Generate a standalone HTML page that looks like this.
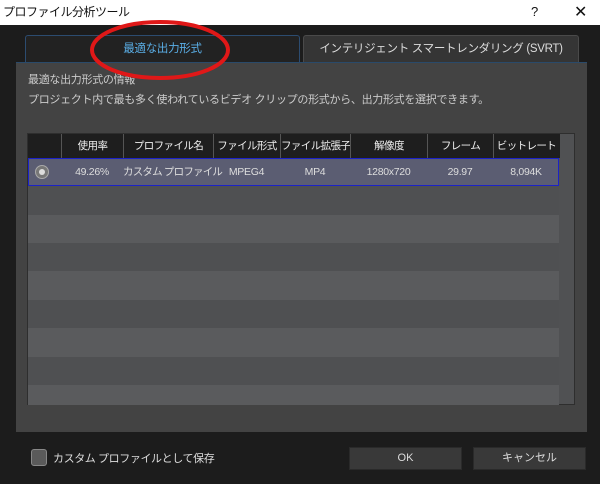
<!DOCTYPE html>
<html><head><meta charset="utf-8"><style>
*{margin:0;padding:0;box-sizing:border-box}
body{width:600px;height:484px;background:#1c1c1c;font-family:"Liberation Sans","Noto Sans CJK JP",sans-serif;position:relative;overflow:hidden;color:#ddd}
.a{position:absolute;white-space:nowrap}
.title{left:0;top:0;width:600px;height:25px;background:#fff;color:#111;font-size:12px;line-height:25px;padding-left:3px;letter-spacing:-0.5px}
.tab{top:35px;height:27px;font-size:11.5px;line-height:27px;text-align:center;border-radius:3px 3px 0 0;letter-spacing:-0.3px}
.panel{left:16px;top:62px;width:571px;height:370px;background:#434343;border-top:1px solid #2a4a6a}
.table{left:27px;top:133px;width:548px;height:272px;background:#505153;border:1px solid #2e2e2e}
.hd{top:0;height:24px;left:0;width:532px;background:#1e1e1e}
.hc{top:0;height:24px;font-size:10.5px;line-height:24px;text-align:center;color:#eee;border-left:1px solid #555;letter-spacing:-0.6px;overflow:hidden}
.rc{font-size:10.5px;line-height:27px;text-align:center;color:#ddd;top:0;letter-spacing:-0.3px}
.btn{top:447px;height:23px;background:#393939;border:1px solid #2a2a2a;font-size:11px;line-height:21px;text-align:center;color:#ddd}
.t{font-size:11px;color:#ccc;letter-spacing:-0.3px}
</style></head><body>
<div class="a title">プロファイル分析ツール</div>
<div class="a" style="left:531px;top:4px;font-size:13px;color:#111">?</div>
<div class="a" style="left:574px;top:2px;font-size:16px;color:#111">✕</div>
<div class="a tab" style="left:25px;width:275px;background:#222;border:1px solid #2c4c70;border-bottom:none;color:#5aaee6">最適な出力形式</div>
<div class="a tab" style="left:303px;width:276px;background:#353535;border:1px solid #4a4a4a;border-bottom:none;color:#ddd">インテリジェント スマートレンダリング (SVRT)</div>
<div class="a panel"></div>
<div class="a t" style="left:28px;top:71px">最適な出力形式の情報</div>
<div class="a t" style="left:28px;top:91px">プロジェクト内で最も多く使われているビデオ クリップの形式から、出力形式を選択できます。</div>
<div class="a table">
 <div class="a" style="left:0;top:52px;width:531px;height:29px;background:#4f5052"></div>
 <div class="a" style="left:0;top:81px;width:531px;height:28px;background:#5a5b5d"></div>
 <div class="a" style="left:0;top:109px;width:531px;height:28px;background:#4f5052"></div>
 <div class="a" style="left:0;top:137px;width:531px;height:29px;background:#5a5b5d"></div>
 <div class="a" style="left:0;top:166px;width:531px;height:28px;background:#4f5052"></div>
 <div class="a" style="left:0;top:194px;width:531px;height:29px;background:#5a5b5d"></div>
 <div class="a" style="left:0;top:223px;width:531px;height:28px;background:#4f5052"></div>
 <div class="a" style="left:0;top:251px;width:531px;height:20px;background:#5a5b5d"></div>
 <div class="a hd"></div>
 <div class="a hc" style="left:33px;width:62px">使用率</div>
 <div class="a hc" style="left:95px;width:90px">プロファイル名</div>
 <div class="a hc" style="left:185px;width:67px">ファイル形式</div>
 <div class="a hc" style="left:252px;width:70px">ファイル拡張子</div>
 <div class="a hc" style="left:322px;width:77px">解像度</div>
 <div class="a hc" style="left:399px;width:66px">フレーム</div>
 <div class="a hc" style="left:465px;width:66px">ビットレート</div>
 <div class="a" style="left:0;top:24px;width:531px;height:28px;background:#5b5d72;border:1px solid #1c22c8">
  <div class="a" style="left:6px;top:6px;width:14px;height:14px;border-radius:50%;background:#777;border:1px solid #aaa"><div class="a" style="left:3px;top:3px;width:6px;height:6px;border-radius:50%;background:#ddd"></div></div>
  <div class="a rc" style="left:32px;width:62px">49.26%</div>
  <div class="a rc" style="left:94px;width:90px;letter-spacing:-0.8px">カスタム プロファイル</div>
  <div class="a rc" style="left:184px;width:67px">MPEG4</div>
  <div class="a rc" style="left:251px;width:70px">MP4</div>
  <div class="a rc" style="left:321px;width:77px">1280x720</div>
  <div class="a rc" style="left:398px;width:66px">29.97</div>
  <div class="a rc" style="left:464px;width:66px">8,094K</div>
 </div>
</div>
<div class="a" style="left:31px;top:449px;width:16px;height:17px;border-radius:3px;background:#5a5a5a;border:1px solid #888"></div>
<div class="a" style="left:53px;top:450px;font-size:11px;color:#ddd;letter-spacing:-0.4px">カスタム プロファイルとして保存</div>
<div class="a btn" style="left:349px;width:113px">OK</div>
<div class="a btn" style="left:473px;width:113px">キャンセル</div>
<svg class="a" style="left:0;top:0" width="600" height="484"><ellipse cx="160" cy="50" rx="68" ry="28" fill="none" stroke="#e01818" stroke-width="4"/></svg>
</body></html>
